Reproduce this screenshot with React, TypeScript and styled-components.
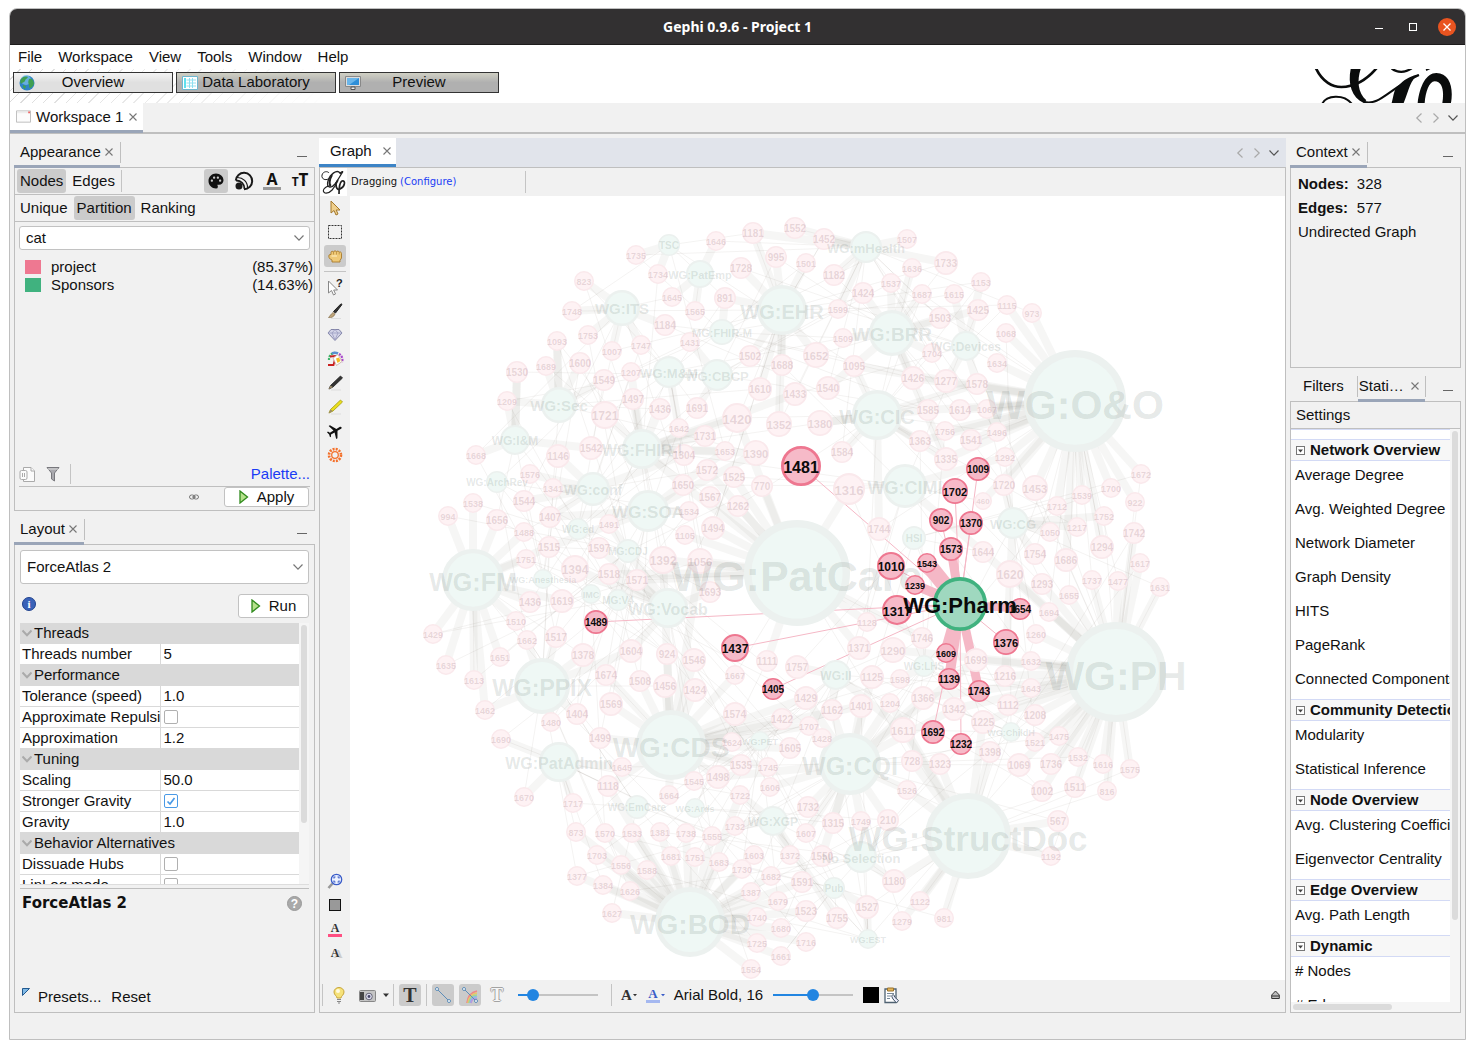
import React from 'react';
import styled, { createGlobalStyle, css } from 'styled-components';
import { MdLocalAirport, MdPalette } from 'react-icons/md';

const sans = '"Liberation Sans", Arial, sans-serif';
const line = '#bfbfbf';
const face = '#f1f1f1';
const pressed = '#cbcbcb';

const Global = createGlobalStyle`
  *, *::before, *::after { box-sizing: border-box; }
  body { margin: 0; background: #fff; color: #111; font: 15px/18px ${sans}; }
  button, input, select { font: inherit; color: inherit; margin: 0; padding: 0; border: 0; background: none; border-radius: 0; }
  button { white-space: nowrap; cursor: default; }
  svg { display: block; flex: none; }
`;

const Desktop = styled.div`
  padding: 8px 9px 9px;
  height: 100vh;
`;

const Frame = styled.div`
  display: flex;
  flex-direction: column;
  height: 100%;
  border: 1px solid ${line};
  border-radius: 8px 8px 0 0;
  background: ${face};
  overflow: hidden;
`;

const TitleBar = styled.header`
  display: grid;
  grid-template-columns: 1fr auto 1fr;
  align-items: center;
  height: 36px;
  flex: none;
  padding: 0 9px;
  background: #323031;
  border-bottom: 1px solid #1d1c1c;
  color: #fff;
`;

const Title = styled.h1`
  grid-column: 2;
  margin: 0;
  font: bold 14px/18px "Noto Sans", "Open Sans", sans-serif;
`;

const WindowButtons = styled.div`
  display: flex;
  justify-self: end;
  align-items: center;
  gap: 16px;
`;

const WindowButton = styled.button<{ $close?: boolean }>`
  display: grid;
  place-items: center;
  width: 18px;
  height: 18px;
  border-radius: 50%;
  background: ${(p) => (p.$close ? '#e95420' : 'none')};
`;

const MenuBar = styled.nav`
  display: flex;
  align-items: center;
  gap: 16px;
  height: 24px;
  flex: none;
  padding: 0 8px;
  background: #fff;
`;

const Banner = styled.div`
  position: relative;
  display: flex;
  gap: 3px;
  height: 34px;
  flex: none;
  padding: 3px 12px 0 3px;
  background: #fff;
  &::before {
    content: '';
    position: absolute;
    inset: 0 auto 0 0;
    width: 320px;
    background: repeating-linear-gradient(135deg, transparent 0 7px, #dcdcdc 7px 8px);
    mask-image: linear-gradient(90deg, #000, transparent);
  }
`;

const Perspective = styled.button<{ $active?: boolean }>`
  position: relative;
  display: flex;
  align-items: center;
  width: 160px;
  height: 21px;
  padding: 0 5px;
  border: 1px solid #333;
  background: ${(p) => (p.$active ? 'linear-gradient(#f4f4f4, #e0e0e0 50%)' : 'linear-gradient(#d0d0c4, #b0b0b0 50%)')};
  span { flex: 1; text-align: center; padding: 0 16px 1px 0; }
`;

const BannerLogo = styled.svg`
  margin: -3px 0 0 auto;
`;

const WorkspaceTabs = styled.div`
  display: flex;
  align-items: stretch;
  height: 31px;
  flex: none;
  border-bottom: 2px solid ${line};
`;

const WorkspaceTab = styled.div`
  display: flex;
  align-items: center;
  gap: 5px;
  margin-bottom: -1px;
  padding: 0 5px 0 6px;
  background: #fff;
  border-bottom: 3px solid #9aa5b8;
`;

const StripNav = styled.div`
  display: flex;
  align-items: center;
  gap: 7px;
  margin-left: auto;
  padding-right: 7px;
`;

const Main = styled.main`
  display: flex;
  flex: 1;
  gap: 4px;
  min-height: 0;
  padding: 4px 4px 26px;
`;

const Column = styled.div<{ $width?: number }>`
  display: flex;
  flex-direction: column;
  gap: 4px;
  min-width: 0;
  min-height: 0;
  flex: ${(p) => (p.$width ? `0 0 ${p.$width}px` : '1 1 0')};
`;

const Dock = styled.section<{ $share: number }>`
  display: flex;
  flex-direction: column;
  flex: ${(p) => p.$share} 1 0;
  min-height: 0;
`;

const DockHead = styled.div<{ $editor?: boolean }>`
  display: flex;
  height: 29px;
  flex: none;
  background: ${(p) => (p.$editor ? '#e1e4eb' : 'none')};
`;

const DockTab = styled.div<{ $tone?: 'tool' | 'editor' | 'idle' }>`
  display: flex;
  align-items: center;
  position: relative;
  gap: 3px;
  padding: 0 6px;
  margin-bottom: -1px;
  ${(p) =>
    p.$tone === 'editor'
      ? css`gap: 10px; padding: 0 4px 0 11px; background: #fff; border-bottom: 3px solid #3d84c6; margin-bottom: 0;`
      : p.$tone === 'idle'
        ? css`padding: 0 13px; border-bottom: 3px solid transparent;`
        : css`border-bottom: 3px solid #9aa5b8;`}
`;

const TabRule = styled.i`
  width: 1px;
  height: 21px;
  margin-top: 4px;
  background: ${line};
`;

const Minimize = styled.button`
  margin: 18px 8px 0 auto;
  width: 10px;
  height: 1px;
  background: #666;
`;

const Body = styled.div`
  display: flex;
  flex-direction: column;
  flex: 1;
  min-height: 0;
  border: 1px solid ${line};
`;

const ToolRow = styled.div`
  display: flex;
  align-items: center;
  gap: 3px;
  height: 27px;
  flex: none;
  padding: 0 2px;
  border-bottom: 1px solid ${line};
`;

const Choice = styled.button<{ $on?: boolean }>`
  height: 24px;
  padding: 0 3px;
  border-radius: 3px;
  background: ${(p) => (p.$on ? pressed : 'none')};
`;

const IconButton = styled.button<{ $on?: boolean; $size?: number }>`
  display: grid;
  place-items: center;
  flex: none;
  width: ${(p) => p.$size ?? 24}px;
  height: ${(p) => p.$size ?? 24}px;
  border-radius: 3px;
  background: ${(p) => (p.$on ? pressed : 'none')};
`;

const VRule = styled.i<{ $h?: number }>`
  width: 1px;
  height: ${(p) => p.$h ?? 22}px;
  background: #c4c4c4;
`;

const Push = styled.div`
  display: flex;
  align-items: center;
  gap: 4px;
  margin-left: auto;
`;

const ColorA = styled.span`
  width: 18px;
  border-bottom: 3px solid #999;
  font: bold 16px/15px "Noto Sans", sans-serif;
  text-align: center;
`;

const SizeT = styled.span`
  font: bold 17px/18px "Noto Sans", sans-serif;
  small { font-size: 12px; }
`;

const SelectBox = styled.div<{ $h: number }>`
  position: relative;
  height: ${(p) => p.$h}px;
  flex: none;
  select {
    width: 100%;
    height: 100%;
    padding: 0 6px;
    appearance: none;
    background: #fff;
    border: 1px solid #c2c2c2;
    border-radius: 3px;
  }
  svg { position: absolute; right: 6px; top: 50%; margin-top: -5px; pointer-events: none; }
`;

const AppearanceContent = styled.div`
  display: flex;
  flex-direction: column;
  flex: 1;
  min-height: 0;
  padding: 4px 4px 0;
`;

const Legend = styled.ul`
  flex: 1;
  list-style: none;
  margin: 8px -3px 0 0;
  padding: 0 0 0 6px;
`;

const LegendItem = styled.li`
  display: flex;
  align-items: center;
  gap: 10px;
  height: 18px;
  span:last-child { margin-left: auto; }
`;

const Swatch = styled.i<{ $c: string }>`
  width: 16px;
  height: 14px;
  background: ${(p) => p.$c};
`;

const FootRow = styled.div<{ $line?: boolean }>`
  display: flex;
  align-items: center;
  height: 24px;
  gap: 10px;
  border-top: ${(p) => (p.$line ? `1px solid ${line}` : '0')};
`;

const ApplyRow = styled(FootRow)`
  padding: 0 1px 3px 0;
`;

const Link = styled.a<{ $small?: boolean }>`
  color: #1a3cf5;
  text-decoration: none;
  ${(p) => p.$small && css`font-size: 10px;`}
`;

const ActionButton = styled.button<{ $w: number; $h: number }>`
  display: flex;
  align-items: center;
  justify-content: center;
  gap: 8px;
  width: ${(p) => p.$w}px;
  height: ${(p) => p.$h}px;
  background: #fff;
  border: 1px solid #c2c2c2;
  border-radius: 3px;
`;

const LayoutContent = styled.div`
  display: flex;
  flex-direction: column;
  flex: 1;
  min-height: 0;
  padding: 5px 5px 4px;
`;

const RunRow = styled.div`
  display: flex;
  align-items: flex-start;
  justify-content: space-between;
  padding: 10px 0 5px;
  svg { margin-top: 3px; }
  button svg { margin: 0; }
`;

const SheetArea = styled.div`
  display: flex;
  flex: 1;
  min-height: 0;
  border-bottom: 1px solid #ddd;
`;

const SheetClip = styled.div`
  flex: 1;
  overflow: hidden;
`;

const Sheet = styled.table`
  width: 100%;
  table-layout: fixed;
  border-collapse: separate;
  border-spacing: 0;
  background: #fff;
  td, th {
    height: 21px;
    padding: 0 0 0 2px;
    line-height: 18px;
    font-weight: normal;
    text-align: left;
    white-space: nowrap;
    overflow: hidden;
    border-bottom: 1px solid #d9d9d9;
  }
  td { border-left: 1px solid #d9d9d9; padding-left: 3px; }
  td input { display: block; width: 100%; height: 18px; }
  th[colspan] { background: #d9d9d9; }
`;

const GroupName = styled.span`
  display: flex;
  align-items: center;
  gap: 2px;
`;

const Tick = styled.input`
  && { width: 14px; height: 14px; }
  appearance: none;
  border: 1px solid #b0b0b0;
  border-radius: 2px;
  background: #fff;
  &:checked {
    border-color: #4a9ae6;
    background: #fff url("data:image/svg+xml,%3Csvg xmlns='http://www.w3.org/2000/svg' viewBox='0 0 12 12'%3E%3Cpath d='M2.500 6.500L5 9L9.500 3' fill='none' stroke='%234a9ae6' stroke-width='1.700'/%3E%3C/svg%3E");
  }
`;

const ScrollTrack = styled.div<{ $flat?: boolean }>`
  flex: none;
  background: #f5f5f5;
  padding: 2px;
  ${(p) => (p.$flat ? css`height: 10px;` : css`width: 10px;`)}
`;

const ScrollThumb = styled.div<{ $len: string; $flat?: boolean }>`
  border-radius: 3px;
  background: #dbdbdb;
  ${(p) => (p.$flat ? css`height: 6px; width: ${p.$len};` : css`width: 6px; height: ${p.$len};`)}
`;

const Description = styled.div`
  display: flex;
  flex-direction: column;
  justify-content: space-between;
  height: 120px;
  flex: none;
  margin-top: 3px;
  border-top: 1px solid ${line};
  padding: 4px 2px 2px;
`;

const LayoutTitle = styled.div`
  display: flex;
  align-items: center;
  justify-content: space-between;
  padding-right: 5px;
  h2 { margin: 0; font: bold 15px/20px "DejaVu Sans", sans-serif; }
`;

const PresetRow = styled.div`
  display: flex;
  gap: 10px;
  svg + button { margin-left: -2px; }
`;

const GraphTop = styled.div`
  display: flex;
  align-items: center;
  height: 28px;
  flex: none;
  font: 10px/14px "DejaVu Sans", sans-serif;
  b { font-weight: normal; margin: 0 3px 0 4px; }
  i { margin-left: 69px; }
`;

const LogoBox = styled.div`
  width: 27px;
  height: 28px;
  background: #fff;
`;

const GraphMiddle = styled.div`
  display: flex;
  flex: 1;
  min-height: 0;
  background: #fff;
`;

const Tools = styled.div`
  display: flex;
  flex-direction: column;
  align-items: center;
  gap: 2px;
  width: 30px;
  padding: 1px 0 16px;
  background: ${face};
`;

const HRule = styled.i`
  width: 22px;
  height: 1px;
  margin: 2px 0;
  background: #c4c4c4;
`;

const Gap = styled.div`
  flex: 1;
`;

const SerifGlyph = styled.span<{ $size?: number; $color?: string; $bar?: string; $hollow?: boolean }>`
  font: bold ${(p) => p.$size ?? 14}px/${(p) => p.$size ?? 14}px "Liberation Serif", serif;
  color: ${(p) => p.$color ?? '#333'};
  text-align: center;
  ${(p) => p.$bar && css`min-width: 14px; border-bottom: 3px solid ${p.$bar};`}
  ${(p) => p.$hollow && css`color: #f6f6f6; text-shadow: 1px 0 #a3a3a3, -1px 0 #a3a3a3, 0 1px #a3a3a3, 0 -1px #a3a3a3;`}
`;

const ShadowA = styled(SerifGlyph)`
  text-shadow: 3px 1px 0 #ccc;
`;

const ColorBox = styled.span<{ $c: string; $edge?: string; $s?: number }>`
  width: ${(p) => p.$s ?? 12}px;
  height: ${(p) => p.$s ?? 12}px;
  background: ${(p) => p.$c};
  border: 1px solid ${(p) => p.$edge ?? p.$c};
`;

const CanvasArea = styled.div`
  flex: 1;
  min-width: 0;
  svg { width: 100%; height: 100%; }
`;

const BottomBar = styled.div`
  display: flex;
  align-items: center;
  height: 32px;
  flex: none;
  gap: 4px;
  padding: 0 4px 2px 2px;
`;

const Cluster = styled.div<{ $gap?: number; $lead?: number }>`
  display: flex;
  align-items: center;
  gap: ${(p) => p.$gap ?? 4}px;
  padding-left: ${(p) => p.$lead ?? 0}px;
`;

const Range = styled.input<{ $fill: number }>`
  appearance: none;
  width: 80px;
  height: 14px;
  background: linear-gradient(90deg, #2285e1 ${(p) => p.$fill}%, #c4c4c4 ${(p) => p.$fill}%) center / 100% 2px no-repeat;
  &::-webkit-slider-thumb {
    appearance: none;
    width: 12px;
    height: 12px;
    border-radius: 50%;
    background: #2285e1;
  }
`;

const Facts = styled.dl`
  display: grid;
  grid-template-columns: auto 1fr;
  column-gap: 8px;
  margin: 0;
  padding: 4px 7px;
  line-height: 24px;
  dt { font-weight: bold; }
  dd { margin: 0; }
  p { grid-column: 1 / 3; margin: 0; }
`;

const StatsArea = styled.div`
  display: flex;
  flex: 1;
  min-height: 0;
`;

const StatsList = styled.div`
  flex: 1;
  min-width: 0;
  overflow: hidden;
  padding-top: 9px;
  background: #fff;
  border-top: 1px solid #d3daf5;
`;

const StatsHead = styled.button`
  display: flex;
  align-items: center;
  gap: 5px;
  width: 100%;
  height: 22px;
  padding-left: 5px;
  overflow: hidden;
  font-weight: bold;
  background: #f7f7f7;
  border: solid #d3daf5;
  border-width: 1px 0;
`;

const StatsItem = styled.button`
  display: block;
  width: 100%;
  height: 34px;
  padding: 0 0 6px 4px;
  overflow: hidden;
  text-align: left;
`;

/* ---------- icons ---------- */

const Cross = () => (
  <svg width="10" height="10" viewBox="0 0 10 10"><path d="M1.5 1.500L8.500 8.500M8.500 1.500L1.500 8.500" stroke="#777" strokeWidth="1.100" /></svg>
);
const Chevron = ({ dir = 'down', c = '#777', w = 1.2 }: { dir?: 'down' | 'left' | 'right'; c?: string; w?: number }) => (
  <svg width="10" height="10" viewBox="0 0 10 10" transform={`rotate(${{ down: 0, left: 90, right: -90 }[dir]})`}>
    <path d="M.5 2.500L5 7.200L9.500 2.500" fill="none" stroke={c} strokeWidth={w} />
  </svg>
);
const Play = () => (
  <svg width="10" height="14" viewBox="0 0 10 14"><path d="M1 1L8.500 7L1 13Z" fill="#b5e18b" stroke="#2f8a1c" strokeWidth="1.300" /></svg>
);
const Globe = () => (
  <svg width="16" height="16" viewBox="0 0 16 16">
    <circle cx="8" cy="8" r="7.500" fill="#2f83c5" /><circle cx="7" cy="5" r="5" fill="#8ecbf0" opacity=".6" />
    <path d="M2 4C4 1 8 1 9 2C8 4 6 4 6 6C5 8 3 7 2 9C1 7 1 6 2 4ZM10 4C13 3 15 6 15 9C13 13 11 14 10 12C11 9 8 9 10 4ZM4 10L7 11L6 14C4 13 4 12 4 10Z" fill="#3f9f51" />
  </svg>
);
const Grid = () => (
  <svg width="16" height="16" viewBox="0 0 16 16">
    <path d="M.5 1.500H15.500V14.500H.5Z" fill="#fff" stroke="#6fb7cf" /><path d="M2 3H4V13H2Z" fill="#5fe0ee" />
    <path d="M4.500 5H14M4.500 8H14M4.500 11H14M7.500 3V13M10.500 3V13" stroke="#8edff0" />
  </svg>
);
const Monitor = () => (
  <svg width="16" height="16" viewBox="0 0 16 16">
    <path d="M.5 1.500H15.500V11.500H.5Z" fill="#ddd" stroke="#888" /><path d="M2 3H14V10H2Z" fill="#2f8fd8" /><path d="M2 3H14L4 10H2Z" fill="#6bb6ea" />
    <path d="M6 12H10V14.500H6Z" fill="#eee" stroke="#555" />
  </svg>
);
const WindowIcon = () => (
  <svg width="15" height="14" viewBox="0 0 16 14"><path d="M.5 .5H15.500V12.500H.5Z" fill="#fcfcfc" stroke="#bbb" /><path d="M1 1H15V3H1Z" fill="#eee" /><path d="M13 1H15V3H13Z" fill="#e66" /></svg>
);
const Spiral = () => (
  <svg width="20" height="20" viewBox="0 0 20 20" fill="none" stroke="#1a1a1a">
    <circle cx="5" cy="15" r="3.500" fill="#1a1a1a" stroke="none" />
    <path d="M1.800 9.500A8.200 8.200 0 1 1 10 18.200" strokeWidth="2" />
    <path d="M2 9.500A8 8 0 0 1 10.500 18" strokeWidth="1.800" />
    <path d="M3 6.500A10 10 0 0 1 13.500 17" strokeWidth="1.200" />
  </svg>
);
const Pages = () => (
  <svg width="17" height="17" viewBox="0 0 17 17" fill="#fbfbfb" stroke="#aaa"><path d="M4.500 1.500H12L15.500 5V15.500H4.500Z" /><path d="M12 1.500V5H15.500" /><rect x="1" y="4.500" width="7" height="9" rx="1.500" /><path d="M3.500 7V11M5.500 7V11" /></svg>
);
const Funnel = () => (
  <svg width="14" height="16" viewBox="0 0 14 16"><path d="M1 1.500H13L8.500 7V15L5.500 13V7Z" fill="#a9a9ae" stroke="#77777c" /><path d="M2 3H12" stroke="#ddd" /></svg>
);
const Chain = () => (
  <svg width="10" height="6" viewBox="0 0 10 6" fill="none" stroke="#777"><rect x=".5" y="1" width="5" height="4" rx="2" /><rect x="4.500" y="1" width="5" height="4" rx="2" /><path d="M3 3H7" /></svg>
);
const Badge = ({ kind }: { kind: 'info' | 'help' }) => (
  <svg width={kind === 'info' ? 14 : 15} height={kind === 'info' ? 14 : 15} viewBox="0 0 15 15">
    <circle cx="7.500" cy="7.500" r="7" fill={kind === 'info' ? '#3a62b8' : '#a9a9a9'} stroke={kind === 'info' ? '#1e3f8c' : '#999'} />
    <text x="7.500" y="11.500" textAnchor="middle" fill="#fff" fontSize="12" fontWeight="bold" fontFamily={kind === 'info' ? 'Liberation Serif' : 'Liberation Sans'}>{kind === 'info' ? 'i' : '?'}</text>
  </svg>
);
const Corner = () => (
  <svg width="8" height="8" viewBox="0 0 8 8"><path d="M.5 .5H7.500L.5 7.500Z" fill="#7fb9e6" stroke="#22598f" /></svg>
);
const Arrow = ({ c, edge, ask }: { c: string; edge: string; ask?: boolean }) => (
  <svg width="16" height="18" viewBox="0 0 16 18">
    <path d={ask ? 'M1.500 3V15L4.500 12.500L6.500 17L8.500 16L6.700 12H10.500Z' : 'M4 2V14L7 11.500L9 16L11 15L9.200 11H13Z'} fill={c} stroke={edge} />
    {ask && <text x="9" y="9" fontSize="11" fontWeight="bold" fontFamily="Liberation Sans" fill="#222">?</text>}
  </svg>
);
const Marquee = () => (
  <svg width="14" height="14" viewBox="0 0 14 14"><rect x=".5" y=".5" width="13" height="13" fill="none" stroke="#333" strokeDasharray="2 1" /></svg>
);
const Hand = () => (
  <svg width="15" height="13" viewBox="0 0 15 13">
    <path d="M4 12V10L1.500 8.500C.5 7 .5 4.500 2 4.500H3V2.500C3 1 5 1 5.500 2C6 .5 8 .5 8.500 1.800C9 .7 11 .9 11.200 2.300C12 1.500 13.500 2 13.500 3.500V8L12 10.500V12Z" fill="#efc977" stroke="#a87b2c" strokeWidth=".9" />
    <path d="M5.500 2V4.500M8.500 2V4.500M11.200 2.500V4.500" stroke="#b98b3a" strokeWidth=".8" /><path d="M3.500 6H9" stroke="#fff1c8" />
  </svg>
);
const Brush = () => (
  <svg width="16" height="16" viewBox="0 0 16 16"><path d="M4 15.500H14" stroke="#ddd" /><path d="M14 .8L15 1.500L8.500 10L6.500 8.500Z" fill="#333" stroke="#222" /><path d="M6 9.500L8 11C7 14 4 15 1.500 14.500C3 13 4 11 6 9.500Z" fill="#bfa57a" stroke="#85704d" strokeWidth=".7" /></svg>
);
const Gem = () => (
  <svg width="16" height="14" viewBox="0 0 16 14"><path d="M4 1.500H12L15 5L8 12.500L1 5Z" fill="#d3d4e8" stroke="#8385a8" /><path d="M1 5H15M5 5L8 12L11 5L8 1.500Z" fill="none" stroke="#9a9cc0" strokeWidth=".8" /></svg>
);
const PaintCan = () => (
  <svg width="17" height="17" viewBox="0 0 17 17">
    <path d="M2 9A6.500 6.500 0 0 1 8 1.800" fill="none" stroke="#3fb56a" strokeWidth="2.200" strokeDasharray="2 1" />
    <path d="M5 2.500A6.500 6.500 0 0 1 11 2.500" fill="none" stroke="#5a8fd0" strokeWidth="2.600" />
    <path d="M12 3A6.500 6.500 0 0 1 15 11" fill="none" stroke="#a848cc" strokeWidth="2.200" strokeDasharray="2 1" />
    <path d="M3 5.500L8 5V8L6.500 14H1" fill="none" stroke="#c92020" strokeWidth="1.800" /><path d="M6 7L11 3.500L15 10.500L9.500 14.500Z" fill="#fff" stroke="#c8a9a0" strokeWidth=".8" /><path d="M9 7.500L12 6.500L13.500 10L10.500 12Z" fill="#f3bb25" />
  </svg>
);
const Pencil = ({ c, edge }: { c: string; edge: string }) => (
  <svg width="16" height="16" viewBox="0 0 16 16"><path d="M4 15H14" stroke="#ddd" /><path d="M13.500 1L15.500 3L6 12L2 14L3.500 10.500Z" fill={c} stroke={edge} strokeWidth=".8" /><path d="M3.500 10.500L6 12L1.500 14.500Z" fill="#9a8a6a" /></svg>
);
const Sun = () => (
  <svg width="16" height="16" viewBox="0 0 16 16" fill="none" stroke="#f4702a"><circle cx="8" cy="8" r="3.300" strokeWidth="1.300" /><circle cx="8" cy="8" r="6" strokeWidth="2.600" strokeDasharray="2 1.140" /></svg>
);
const Magnifier = () => (
  <svg width="16" height="17" viewBox="0 0 16 17"><path d="M5.500 10.500L1.500 15" stroke="#999" strokeWidth="2.600" /><circle cx="9.500" cy="6.500" r="5.200" fill="#edf2ff" stroke="#3a5cc8" strokeWidth="1.300" /><path d="M7 5.500V4H8.500M10.500 4H12V5.500M12 7.500V9H10.500M8.500 9H7V7.500" fill="none" stroke="#3a5cc8" strokeWidth="1.200" /></svg>
);
const Bulb = () => (
  <svg width="12" height="17" viewBox="0 0 12 17"><path d="M4 11C4 9 1 8 1 5A5 4.500 0 0 1 11 5C11 8 8 9 8 11Z" fill="#f6e27a" stroke="#c7a53b" /><ellipse cx="5" cy="4" rx="2" ry="2" fill="#fffbe0" /><path d="M4 12.500H8M4 14.500H8M5 16H7" stroke="#888" strokeWidth="1.200" /></svg>
);
const Camera = () => (
  <svg width="17" height="13" viewBox="0 0 17 13"><rect x=".5" y="1.500" width="16" height="11" rx="1" fill="#c5c5c5" stroke="#888" /><path d="M1 3H5V11H1Z" fill="#444" /><circle cx="10" cy="7.500" r="3.300" fill="#dde" stroke="#667" /><circle cx="10" cy="7.500" r="1.400" fill="#446" /></svg>
);
const EdgeIcon = ({ rainbow }: { rainbow?: boolean }) => (
  <svg width="18" height="18" viewBox="0 0 18 18" fill="none">
    {rainbow && ['#e88', '#ecc36a', '#a4d88a', '#8bbbe8', '#b69ae0'].map((c, i) => <path key={c} d={`M${6 + i} 17Q${7 + i} ${7 + i} 16 ${5 + i * 2}`} stroke={c} strokeWidth="1.700" />)}
    <path d="M3 3L15 15" stroke="#5d8db8" /><circle cx="3" cy="3" r="1.500" fill="#fff" stroke="#5d8db8" /><circle cx="15" cy="15" r="1.500" fill="#fff" stroke="#5d8db8" />
  </svg>
);
const Caret = ({ c = '#333', s = 5 }: { c?: string; s?: number }) => (
  <svg width={s} height={s} viewBox="0 0 6 6"><path d="M0 1.500H6L3 5Z" fill={c} /></svg>
);
const Clipboard = () => (
  <svg width="17" height="17" viewBox="0 0 17 17"><path d="M2 2H13V15.500H2Z" fill="#fff" stroke="#4f6272" strokeWidth="1.300" /><path d="M4.500 1H10.500V4H4.500Z" fill="#e3b65b" stroke="#9a722b" /><path d="M4 6.500H11M4 9H8M4 11.500H7" stroke="#789" /><path d="M9 10C8 7 12 7 11.500 10L15.500 13.500L13.500 16L10 12Z" fill="#eef" stroke="#3f5261" /></svg>
);
const Expand = () => (
  <svg width="9" height="10" viewBox="0 0 9 10"><path d="M.7 5L4.500 1L8.300 5V8.500H.7Z" fill="#bbb" stroke="#333" /><path d="M1 6H8" stroke="#333" /></svg>
);
const FoldBox = () => (
  <svg width="9" height="9" viewBox="0 0 9 9"><rect x=".5" y=".5" width="8" height="8" fill="#fff" stroke="#777" /><path d="M2 3.500H7L4.500 6.500Z" fill="#444" /></svg>
);
const SmallLogo = () => (
  <svg width="27" height="28" viewBox="0 0 27 28" fill="none" stroke="#222">
    <path d="M11 9C6 14 1 11 2 7C3 3 8 3 9 5" strokeWidth="1" /><path d="M20 5C17 1 10 6 8 13C6 20 11 21 15 16C18 12 20 8 22 5C24 3 21 3 20 6" strokeWidth="1.300" />
    <path d="M17 13C15 20 10 26 5 25C1 23 5 18 10 18" strokeWidth="1.200" /><path d="M12 7C9 12 9 17 11 18" strokeWidth="2" />
    <path d="M18 12C14 17 17 23 20 21C25 19 26 12 22 13C20 14 19 20 19 26" strokeWidth="1.700" />
  </svg>
);

/* ---------- graph data: label, x, y, radius, parent hubs ---------- */

type Hub = [string, number, number, number];
const hubs: Record<string, Hub> = {
  tsc: ['TSC', 669, 245, 11], pe: ['WG:PatEmp', 700, 274, 14], its: ['WG:ITS', 622, 308, 18], ehr: ['WG:EHR', 782, 310, 25],
  fm2: ['MG:FHIR-M', 722, 332, 13], mm: ['WG:M&M', 669, 372, 16], cb: ['WG:CBCP', 717, 375, 16], sec: ['WG:Sec', 559, 405, 18],
  im: ['WG:I&M', 515, 440, 15], fi: ['WG:FHIR-I', 642, 449, 20], ar: ['WG:ArchRev', 497, 482, 11], cf: ['WG:conf', 593, 489, 17],
  soa: ['WG:SOA', 648, 511, 21], ed: ['WG:ed', 578, 529, 11], cdj: ['MG:CDJ', 628, 551, 12], pc: ['WG:PatCare', 797, 573, 53],
  fm: ['WG:FM', 473, 580, 31], an: ['WG:Anesthesia', 543, 579, 10], imc: ['IMC', 591, 594, 10], v4: ['MG:V4', 618, 600, 11],
  vo: ['WG:Vocab', 668, 608, 20], mh: ['WG:mHealth', 866, 247, 16], brr: ['WG:BRR', 892, 333, 23], dev: ['WG:Devices', 966, 346, 15],
  cic: ['WG:CIC', 877, 415, 25], oo: ['WG:O&O', 1075, 401, 51], ci: ['WG:CIMI', 905, 486, 22], cg: ['WG:CG', 1013, 523, 16],
  hsi: ['HSI', 914, 538, 12], ph: ['WG:PH', 1116, 672, 50], lhs: ['WG:LHS', 924, 666, 11], ii: ['WG:II', 836, 675, 15],
  ch: ['WG:ChildH', 1011, 732, 10], cq: ['WG:CQI', 850, 764, 31], sd: ['WG:StructDoc', 968, 836, 43], ns: ['No Selection', 861, 857, 16],
  pub: ['Pub', 834, 888, 11], est: ['WG:EST', 868, 939, 10], bod: ['WG:BOD', 690, 922, 35], ppix: ['WG:PPIX', 542, 686, 28],
  cds: ['WG:CDS', 671, 745, 35], pa: ['WG:PatAdmin', 559, 762, 20], em: ['WG:EmCare', 637, 807, 12], ards: ['WG:Ards', 695, 808, 10],
  xgp: ['WG:XGP', 773, 821, 15], pet: ['WG:PET', 760, 741, 10],
};

const leafData = `
1181 753 233 11 mh|1552 795 228 11 mh|1452 824 239 11 mh|1646 716 241 10 pe|1735 636 255 10 tsc|1734 658 274 10 tsc
995 776 257 11 ehr|1501 806 263 10 ehr|1182 834 275 11 mh|1728 741 268 11 ehr|823 584 281 10 its|1645 672 297 10 pe
891 725 298 11 fm2|1565 695 311 10 pe|1748 572 311 10 its|1599 838 309 10 mh|1184 665 325 11 its|1753 588 335 10 its
1093 557 341 10 sec|1431 690 342 10 cb|1747 641 345 10 its|1007 612 351 10 its|1509 843 338 10 brr|1689 546 366 10 sec
1600 580 363 11 sec|1530 517 372 11 im|1207 631 372 10 fi|1502 750 356 11 ehr|1688 782 365 11 ehr|1652 816 355 13 ehr
1549 604 380 11 sec|1610 760 389 12 ehr|1433 795 394 12 fi|1540 828 388 12 brr|1209 507 401 10 sec|1721 605 415 14 fi
1497 633 399 11 fi|1436 660 409 11 fi|1691 697 408 11 cb|1420 737 418 15 fi|1352 779 424 13 ehr|1380 820 423 13 cic
1642 679 428 10 mm|1731 705 436 11 fi|1668 476 455 10 im|1146 558 456 12 cf|1542 591 448 12 im|1304 684 455 11 fi
1653 725 451 10 fi|1390 756 453 13 fi|1584 842 452 11 cic|1576 530 474 10 cf|1341 553 488 10 cf|1572 707 470 11 pc
1525 734 477 11 pc|770 762 486 11 pc|1650 683 485 11 pc|1567 710 497 11 pc|1316 849 489 16 pc|1538 473 503 10 fm
1544 524 501 11 cf|1262 738 506 11 pc|1534 689 511 10 soa|994 448 516 10 fm|1656 497 520 11 fm|1407 550 517 11 soa
1491 609 524 10 vo|1488 524 532 10 fm|1494 713 528 12 pc|1105 685 535 10 pc|1515 549 547 11 fm|1597 599 548 11 vo
1751 526 559 10 fm|1392 663 560 14 pc|1056 700 561 13 pc|1394 575 569 14 vo|1518 609 574 11 pc|1571 637 580 11 pc
1693 710 592 11 vo|1507 907 239 10 mh|1733 946 263 12 mh|1636 912 268 10 brr|1537 891 283 10 brr|1424 863 293 11 brr
1687 922 294 10 brr|1615 954 294 10 dev|1153 981 282 10 dev|1425 978 310 11 brr|1115 1007 305 10 oo|973 1032 313 10 oo
1503 940 318 11 brr|1068 1006 333 10 oo|1704 932 353 10 brr|1634 997 363 10 oo|1095 854 366 11 cic|1426 913 378 12 brr
1277 946 381 12 dev|1578 977 384 11 cic|1585 928 410 11 oo|1614 960 410 11 oo|1067 987 409 10 oo|1756 945 431 10 oo
1363 920 441 11 oo|1541 971 440 11 oo|1496 997 432 10 oo|1292 1005 457 10 oo|1335 946 459 12 oo|460 983 501 9 oo
1720 1004 485 11 oo|1453 1035 488 13 oo|1539 1082 495 10 oo|1700 1111 488 10 oo|1672 1141 474 10 oo|922 1135 502 10 oo
1712 1057 506 10 oo|1752 1104 516 10 cg|1217 1077 527 10 cg|1050 1050 532 10 cg|1742 1134 533 11 ph|1744 879 529 12 cic
1294 1102 547 12 oo|1644 983 552 11 ph|1754 1035 554 11 cg|1686 1066 560 12 oo|1620 1010 574 14 ph|1617 1140 563 10 ph
1293 1042 584 11 ph|1655 1069 595 10 ph|1737 1092 580 10 ph|1477 1118 581 10 ph|1631 1160 587 10 ph|1128 867 622 10 pc
1746 922 638 11 pc|1371 859 648 12 pc|1290 893 650 13 ph|1694 1049 612 10 ph|1260 1036 634 10 ph|1699 976 660 12 ph
1632 1031 661 10 ph|1216 1005 676 11 ph|1125 872 677 12 cq|1598 900 679 10 lhs|1643 1031 688 10 ph|1366 923 698 12 ph
1204 890 703 10 cq|1401 861 706 12 cq|1162 832 710 11 cq|1342 954 709 12 ph|1112 1008 705 11 ph|1208 1035 715 11 ph
1225 983 722 12 sd|1707 809 726 10 cq|1429 806 698 12 cq|1757 797 667 12 ii|1611 903 730 13 sd|1475 1059 736 10 ph
1521 1035 742 10 ph|1398 990 752 11 sd|728 912 761 11 sd|1323 940 764 11 sd|1069 1019 765 12 ph|1736 1051 764 11 ph
1532 1078 757 10 ph|1616 1103 764 10 ph|1575 1130 769 10 ph|1526 907 790 10 cq|1002 1042 791 11 ph|1511 1075 787 11 ph
816 1107 791 10 ph|1732 808 807 11 cq|1315 833 823 11 cq|1749 861 821 10 cq|210 888 820 11 cq|567 1058 821 11 sd
1607 806 833 10 cq|1550 822 856 11 cq|1192 1051 856 10 sd|1591 802 882 11 bod|1180 894 881 12 sd|1122 920 901 10 sd
1527 867 907 12 pub|1523 806 911 11 bod|1755 837 918 11 xgp|1279 902 921 10 sd|981 944 918 10 sd|1716 806 942 10 bod
1377 577 876 10 bod|1384 603 885 10 bod|1556 621 865 10 bod|1588 647 870 10 bod|1626 630 891 10 bod|1627 612 913 10 bod
1683 719 862 10 bod|1730 742 869 10 bod|1682 771 876 10 bod|1387 751 892 10 bod|1679 778 901 10 bod|1740 757 917 10 bod
1680 781 928 10 bod|1725 757 943 10 bod|1661 781 956 10 bod|1554 751 969 10 bod|873 576 832 10 bod|1703 597 855 10 bod
1570 605 833 10 bod|1533 632 833 10 bod|1381 660 832 10 bod|1738 686 833 10 bod|1555 712 836 10 bod|1681 671 856 10 bod
1751 695 857 10 bod|1603 754 855 10 bod|1429 433 634 10 fm|1635 446 665 10 fm|1613 474 680 10 fm
1651 500 657 10 fm|1510 516 621 10 fm|1436 530 602 11 fm|1619 562 601 12 fm|1662 527 640 10 ppix|1517 556 637 11 ppix
1378 583 655 12 ppix|1674 606 675 11 cds|1604 631 651 12 vo|924 667 654 11 cds|1546 694 660 12 cds|1508 640 681 11 cds
1456 665 686 12 cds|1424 695 690 12 cds|1111 767 661 11 pc|1667 735 675 10 cds|1574 735 714 12 cds|1422 782 719 11 cds
1462 485 710 10 ppix|1690 501 739 10 pa|1670 524 797 10 pa|1717 573 803 10 pa|1118 608 786 11 cds|1404 577 714 11 ppix
1569 611 704 12 cds|1499 600 738 11 cds|1645 622 767 10 pa|1605 790 748 11 cds|1428 822 738 10 cq|1745 768 767 10 cds
1535 741 765 11 cds|1498 718 777 12 cq|1606 770 787 10 cq|1722 740 795 10 xgp|1664 669 795 10 cds|1545 694 781 10 cds
1732 735 826 10 xgp|1372 790 855 10 xgp|1624 732 742 10 cds|1480 551 722 10 ppix`;

type Leaf = { id: string; x: number; y: number; r: number; hub: string };
const leaves: Leaf[] = leafData.trim().split(/[|\n]/).map((s) => {
  const [id, x, y, r, hub] = s.trim().split(' ');
  return { id, x: +x, y: +y, r: +r, hub };
});

const extraLinks: [string, string][] = [
  ['1181', 'ehr'], ['1530', 'im'], ['1093', 'sec'], ['891', 'ehr'], ['1209', 'im'], ['1420', 'pc'], ['1653', 'soa'], ['1407', 'cf'],
  ['1390', 'soa'], ['1585', 'cic'], ['1363', 'cic'], ['1380', 'cic'], ['1335', 'cic'], ['1335', 'brr'], ['1095', 'oo'], ['1578', 'oo'],
  ['1578', 'dev'], ['1426', 'oo'], ['1720', 'cg'], ['1644', 'ci'], ['1292', 'ci'], ['1366', 'cq'], ['1342', 'cq'], ['1204', 'sd'],
  ['1401', 'cds'], ['1526', 'sd'], ['1225', 'ph'], ['1216', 'cg'], ['1392', 'cds'], ['1571', 'vo'], ['1518', 'vo'], ['1056', 'cds'],
  ['1604', 'ppix'], ['1462', 'fm'], ['1515', 'soa'], ['1429', 'cds'], ['1707', 'cds'], ['1162', 'ii'], ['1118', 'bod'], ['1722', 'bod'],
  ['1650', 'fi'], ['1304', 'cf'], ['1699', 'cq'], ['1611', 'ii'], ['1498', 'cds'], ['1527', 'est'], ['1180', 'ns'],
];

type Hot = [string, number, number, number, number];
const hot: Hot[] = [
  ['1481', 801, 466, 20, 1], ['1009', 978, 469, 12, 1], ['1702', 955, 491, 13, 1], ['902', 941, 520, 12, 1], ['1370', 971, 523, 12, 1],
  ['1573', 951, 549, 12, 9], ['1010', 891, 566, 14, 1], ['1543', 927, 563, 10, 16], ['1239', 915, 585, 10, 10], ['1317', 897, 610, 15, 1],
  ['1654', 1020, 609, 11, 8], ['1376', 1006, 642, 13, 1], ['1609', 946, 653, 10, 12], ['1139', 949, 679, 11, 10], ['1743', 979, 691, 11, 9],
  ['1692', 933, 732, 12, 1], ['1232', 961, 744, 11, 1], ['1489', 596, 622, 12, 1], ['1437', 735, 648, 14, 1], ['1405', 773, 689, 11, 1],
];
const pharm = { x: 960, y: 604, r: 27 };

const tones = {
  hub: { fill: '#eff8f5', ring: '#ecf1ef', text: 'rgba(70,90,82,.14)' },
  leaf: { fill: '#fef2f4', ring: '#fae9ec', text: 'rgba(110,60,72,.17)' },
  hot: { fill: '#f6bac8', ring: '#ee7790', text: '#0a0a0a' },
  hotHub: { fill: '#9fd8bf', ring: '#40b27f', text: '#0a0a0a' },
};
type Tone = keyof typeof tones;

const Disc = ({ x, y, r, tone }: { x: number; y: number; r: number; tone: Tone }) => {
  const ring = Math.max(1.5, r * 0.14);
  return <circle cx={x} cy={y} r={r - ring / 2} fill={tones[tone].fill} stroke={tones[tone].ring} strokeWidth={ring} />;
};
const Label = ({ x, y, r, tone, text }: { x: number; y: number; r: number; tone: Tone; text: string }) => {
  const size = Math.round(tone === 'leaf' || tone === 'hot' || r < 13 ? r * 0.74 + 1.6 : r * 0.81);
  return <text x={x} y={y + size * 0.43} fontSize={size} fill={tones[tone].text}>{text}</text>;
};

const hubList = Object.values(hubs);
const NetworkGraph = () => (
  <svg viewBox="350 196 935 784" fontFamily="Liberation Sans, Arial, sans-serif" fontWeight="bold" textAnchor="middle" role="img" aria-label="Network graph">
    <g stroke="#6b5f50" strokeOpacity=".06" strokeWidth="8">
      {leaves.map((l, i) => <line key={i} x1={l.x} y1={l.y} x2={hubs[l.hub][1]} y2={hubs[l.hub][2]} />)}
      {extraLinks.map(([id, hub]) => {
        const l = leaves.find((n) => n.id === id)!;
        return <line key={id + hub} x1={l.x} y1={l.y} x2={hubs[hub][1]} y2={hubs[hub][2]} />;
      })}
    </g>
    <g stroke="#6b5f50" strokeOpacity=".13" strokeWidth=".6">
      {leaves.map((l, i) => {
        const near = hubList.filter((h) => Math.hypot(h[1] - l.x, h[2] - l.y) < 240);
        const a = near[(i * 7) % near.length];
        const b = near[(i * 11 + 3) % near.length];
        return <g key={i}><line x1={l.x} y1={l.y} x2={a[1]} y2={a[2]} />{i % 2 === 0 && <line x1={l.x} y1={l.y} x2={b[1]} y2={b[2]} />}</g>;
      })}
    </g>
    <g stroke="#f5b8c6">
      {hot.map(([id, x, y, , w]) => <line key={id} x1={pharm.x} y1={pharm.y} x2={x} y2={y} strokeWidth={w} />)}
    </g>
    {hubList.map(([t, x, y, r]) => <Disc key={t} x={x} y={y} r={r} tone="hub" />)}
    {leaves.map((l, i) => <Disc key={i} x={l.x} y={l.y} r={l.r} tone="leaf" />)}
    {leaves.map((l, i) => <Label key={i} x={l.x} y={l.y} r={l.r} tone="leaf" text={l.id} />)}
    {hubList.map(([t, x, y, r]) => <Label key={t} x={x} y={y} r={r} tone="hub" text={t} />)}
    {hot.map(([id, x, y, r]) => <Disc key={id} x={x} y={y} r={r} tone="hot" />)}
    <Disc {...pharm} tone="hotHub" />
    {hot.map(([id, x, y, r]) => <Label key={id} x={x} y={y} r={r} tone="hot" text={id} />)}
    <Label {...pharm} tone="hotHub" text="WG:Pharm" />
  </svg>
);

/* ---------- panels ---------- */

const properties: { group: string; rows: [string, string | boolean][] }[] = [
  { group: 'Threads', rows: [['Threads number', '5']] },
  { group: 'Performance', rows: [['Tolerance (speed)', '1.0'], ['Approximate Repulsion', false], ['Approximation', '1.2']] },
  { group: 'Tuning', rows: [['Scaling', '50.0'], ['Stronger Gravity', true], ['Gravity', '1.0']] },
  { group: 'Behavior Alternatives', rows: [['Dissuade Hubs', false], ['LinLog mode', false]] },
];

const statistics: [string, string[]][] = [
  ['Network Overview', ['Average Degree', 'Avg. Weighted Degree', 'Network Diameter', 'Graph Density', 'HITS', 'PageRank', 'Connected Components']],
  ['Community Detection', ['Modularity', 'Statistical Inference']],
  ['Node Overview', ['Avg. Clustering Coefficient', 'Eigenvector Centrality']],
  ['Edge Overview', ['Avg. Path Length']],
  ['Dynamic', ['# Nodes', '# Edges']],
];

const Appearance = () => (
  <Dock $share={373}>
    <DockHead>
      <DockTab>Appearance <Cross /></DockTab><TabRule />
      <Minimize aria-label="Minimize" />
    </DockHead>
    <Body>
      <ToolRow>
        <Choice $on>Nodes</Choice>
        <Choice>Edges</Choice>
        <VRule />
        <Push>
          <IconButton $on aria-label="Color"><MdPalette size={18} color="#111" /></IconButton>
          <IconButton aria-label="Size"><Spiral /></IconButton>
          <IconButton aria-label="Label color"><ColorA>A</ColorA></IconButton>
          <IconButton aria-label="Label size"><SizeT><small>T</small>T</SizeT></IconButton>
        </Push>
      </ToolRow>
      <ToolRow>
        <Choice>Unique</Choice>
        <Choice $on>Partition</Choice>
        <Choice>Ranking</Choice>
      </ToolRow>
      <AppearanceContent>
        <SelectBox $h={24}>
          <select aria-label="Partition attribute"><option>cat</option></select>
          <Chevron />
        </SelectBox>
        <Legend>
          <LegendItem><Swatch $c="#ee7891" /><span>project</span><span>(85.37%)</span></LegendItem>
          <LegendItem><Swatch $c="#40b27f" /><span>Sponsors</span><span>(14.63%)</span></LegendItem>
        </Legend>
        <FootRow>
          <Pages /><Funnel /><VRule $h={20} />
          <Push><Link href="#palette">Palette...</Link></Push>
        </FootRow>
        <ApplyRow $line>
          <Push>
            <Cluster $gap={25}>
              <Chain />
              <ActionButton $w={85} $h={20}><Play />Apply</ActionButton>
            </Cluster>
          </Push>
        </ApplyRow>
      </AppearanceContent>
    </Body>
  </Dock>
);

const LayoutPanel = () => (
  <Dock $share={498}>
    <DockHead>
      <DockTab>Layout <Cross /></DockTab><TabRule />
      <Minimize aria-label="Minimize" />
    </DockHead>
    <Body>
      <LayoutContent>
        <SelectBox $h={34}>
          <select aria-label="Layout algorithm"><option>ForceAtlas 2</option></select>
          <Chevron />
        </SelectBox>
        <RunRow>
          <Cluster $lead={2}><Badge kind="info" /></Cluster>
          <ActionButton $w={71} $h={24}><Play />Run</ActionButton>
        </RunRow>
        <SheetArea>
          <SheetClip>
            <Sheet>
              <tbody>
                {properties.map((g) => (
                  <React.Fragment key={g.group}>
                    <tr><th colSpan={2}><GroupName><Chevron c="#aaa" w={2} />{g.group}</GroupName></th></tr>
                    {g.rows.map(([name, value]) => (
                      <tr key={name}>
                        <th scope="row">{name}</th>
                        <td>
                          {typeof value === 'boolean'
                            ? <Tick type="checkbox" aria-label={name} defaultChecked={value} />
                            : <input aria-label={name} defaultValue={value} />}
                        </td>
                      </tr>
                    ))}
                  </React.Fragment>
                ))}
              </tbody>
            </Sheet>
          </SheetClip>
          <ScrollTrack><ScrollThumb $len="77%" /></ScrollTrack>
        </SheetArea>
        <Description>
          <LayoutTitle><h2>ForceAtlas 2</h2><Badge kind="help" /></LayoutTitle>
          <PresetRow><Corner /><button>Presets...</button><button>Reset</button></PresetRow>
        </Description>
      </LayoutContent>
    </Body>
  </Dock>
);

const GraphPanel = () => (
  <Dock $share={1}>
    <DockHead $editor>
      <DockTab $tone="editor">Graph <Cross /></DockTab>
      <StripNav><Chevron dir="left" c="#aaa" /><Chevron dir="right" c="#aaa" /><Chevron c="#555" /></StripNav>
    </DockHead>
    <Body>
      <GraphTop>
        <LogoBox><SmallLogo /></LogoBox>
        <b>Dragging</b>
        <Link $small href="#configure">(Configure)</Link>
        <VRule />
      </GraphTop>
      <GraphMiddle>
        <Tools>
          <IconButton $size={22} aria-label="Direct selection"><Arrow c="#efcf8c" edge="#a3782c" /></IconButton>
          <IconButton $size={22} aria-label="Rectangle selection"><Marquee /></IconButton>
          <IconButton $size={22} $on aria-label="Drag"><Hand /></IconButton>
          <HRule />
          <IconButton $size={22} aria-label="Edit"><Arrow c="#fff" edge="#888" ask /></IconButton>
          <IconButton $size={22} aria-label="Painter"><Brush /></IconButton>
          <IconButton $size={22} aria-label="Sizer"><Gem /></IconButton>
          <IconButton $size={22} aria-label="Brush"><PaintCan /></IconButton>
          <IconButton $size={22} aria-label="Node pencil"><Pencil c="#333" edge="#222" /></IconButton>
          <IconButton $size={22} aria-label="Edge pencil"><Pencil c="#eadf1c" edge="#a39b12" /></IconButton>
          <IconButton $size={22} aria-label="Shortest path"><MdLocalAirport size={18} color="#111" transform="rotate(60)" /></IconButton>
          <IconButton $size={22} aria-label="Heat map"><Sun /></IconButton>
          <Gap />
          <IconButton $size={22} aria-label="Center on graph"><Magnifier /></IconButton>
          <IconButton $size={22} aria-label="Reset colors"><ColorBox $c="#999" $edge="#111" /></IconButton>
          <IconButton $size={22} aria-label="Reset label colors"><SerifGlyph $size={12} $bar="#ff4f82">A</SerifGlyph></IconButton>
          <IconButton $size={22} aria-label="Reset label visible"><ShadowA $size={12}>A</ShadowA></IconButton>
        </Tools>
        <CanvasArea><NetworkGraph /></CanvasArea>
      </GraphMiddle>
      <BottomBar>
        <Cluster $gap={4}>
          <VRule />
          <IconButton aria-label="Background"><Bulb /></IconButton>
          <IconButton aria-label="Screenshot"><Camera /></IconButton>
          <Caret s={6} />
        </Cluster>
        <Cluster $gap={5}>
          <VRule />
          <IconButton $size={22} $on aria-label="Show node labels"><SerifGlyph $size={20}>T</SerifGlyph></IconButton>
          <VRule />
          <IconButton $size={22} $on aria-label="Show edges"><EdgeIcon /></IconButton>
          <IconButton $size={22} $on aria-label="Edges have source node color"><EdgeIcon rainbow /></IconButton>
          <IconButton $size={22} aria-label="Show edge labels"><SerifGlyph $size={18} $hollow>T</SerifGlyph></IconButton>
        </Cluster>
        <Cluster $gap={13} $lead={6}>
          <Range type="range" $fill={18} min="0" max="100" defaultValue={13} aria-label="Edge weight scale" />
          <VRule />
        </Cluster>
        <Cluster $gap={9} $lead={5}>
          <Cluster $gap={1}><SerifGlyph $size={15}>A</SerifGlyph><Caret s={4} /></Cluster>
          <Cluster $gap={1}><SerifGlyph $size={13} $color="#3a5cc8" $bar="#a5b8f0">A</SerifGlyph><Caret c="#3a5cc8" s={4} /></Cluster>
          <button>Arial Bold, 16</button>
        </Cluster>
        <Cluster $gap={10} $lead={6}>
          <Range type="range" $fill={50} min="0" max="100" defaultValue={50} aria-label="Font size scale" />
          <Cluster><ColorBox $c="#000" $s={16} /><Clipboard /></Cluster>
        </Cluster>
        <Push><IconButton $size={12} aria-label="Expand settings"><Expand /></IconButton></Push>
      </BottomBar>
    </Body>
  </Dock>
);

const ContextPanel = () => (
  <Dock $share={230}>
    <DockHead>
      <DockTab>Context <Cross /></DockTab><TabRule />
      <Minimize aria-label="Minimize" />
    </DockHead>
    <Body>
      <Facts>
        <dt>Nodes:</dt><dd>328</dd>
        <dt>Edges:</dt><dd>577</dd>
        <p>Undirected Graph</p>
      </Facts>
    </Body>
  </Dock>
);

const StatTab = styled(DockTab)`
  gap: 6px;
  padding: 0 5px 0 1px;
`;

const StatisticsPanel = () => (
  <Dock $share={641}>
    <DockHead>
      <DockTab $tone="idle">Filters</DockTab><TabRule />
      <StatTab>Stati… <Cross /></StatTab><TabRule />
      <Minimize aria-label="Minimize" />
    </DockHead>
    <Body>
      <ToolRow><Choice>Settings</Choice></ToolRow>
      <StatsArea>
        <StatsList>
          {statistics.map(([group, items]) => (
            <React.Fragment key={group}>
              <StatsHead><FoldBox />{group}</StatsHead>
              {items.map((item) => <StatsItem key={item}>{item}</StatsItem>)}
            </React.Fragment>
          ))}
        </StatsList>
        <ScrollTrack><ScrollThumb $len="86%" /></ScrollTrack>
      </StatsArea>
      <ScrollTrack $flat><ScrollThumb $flat $len="60%" /></ScrollTrack>
    </Body>
  </Dock>
);

export default function App() {
  return (
    <Desktop>
      <Global />
      <Frame>
        <TitleBar>
          <Title>Gephi 0.9.6 - Project 1</Title>
          <WindowButtons>
            <WindowButton aria-label="Minimize"><svg width="8" height="8"><path d="M0 5.500H8" stroke="#fff" /></svg></WindowButton>
            <WindowButton aria-label="Maximize"><svg width="8" height="8"><rect x=".5" y=".5" width="7" height="7" fill="none" stroke="#fff" /></svg></WindowButton>
            <WindowButton $close aria-label="Close"><svg width="8" height="8"><path d="M.5 .5L7.500 7.500M7.500 .5L.5 7.500" stroke="#fff" strokeWidth="1.300" /></svg></WindowButton>
          </WindowButtons>
        </TitleBar>
        <MenuBar>
          {['File', 'Workspace', 'View', 'Tools', 'Window', 'Help'].map((m) => <button key={m}>{m}</button>)}
        </MenuBar>
        <Banner>
          <Perspective $active><Globe /><span>Overview</span></Perspective>
          <Perspective><Grid /><span>Data Laboratory</span></Perspective>
          <Perspective><Monitor /><span>Preview</span></Perspective>
          <BannerLogo width="140" height="34" viewBox="0 0 420 102" fill="none" stroke="#0a0c0c" strokeWidth="8">
            <path d="M8 -4C28 40 60 54 85 54C130 54 165 28 192 -4" />
            <path d="M113 0H143C132 34 134 70 160 94L152 102C116 86 104 44 113 0Z" fill="#0a0c0c" stroke="none" />
            <path d="M152 98C200 112 225 60 318 18" strokeWidth="6" />
            <path d="M318 16C292 30 288 64 272 102H236C244 74 240 62 262 44C280 28 296 20 318 16Z" fill="#0a0c0c" stroke="none" />
            <path d="M28 104C40 78 92 74 116 104" strokeWidth="6" />
            <path d="M314 102C320 50 340 12 370 12C410 12 422 56 414 102H388C394 64 388 38 365 37C348 38 338 68 335 102Z" fill="#0a0c0c" stroke="none" />
            <path d="M236 -2C252 12 276 12 296 -2" strokeWidth="7" /><path d="M338 0H352L340 6Z" fill="#0a0c0c" stroke="none" />
          </BannerLogo>
        </Banner>
        <WorkspaceTabs>
          <WorkspaceTab><WindowIcon />Workspace 1 <Cross /></WorkspaceTab>
          <StripNav><Chevron dir="left" c="#aaa" /><Chevron dir="right" c="#aaa" /><Chevron c="#555" /></StripNav>
        </WorkspaceTabs>
        <Main>
          <Column $width={301}><Appearance /><LayoutPanel /></Column>
          <Column><GraphPanel /></Column>
          <Column $width={171}><ContextPanel /><StatisticsPanel /></Column>
        </Main>
      </Frame>
    </Desktop>
  );
}
